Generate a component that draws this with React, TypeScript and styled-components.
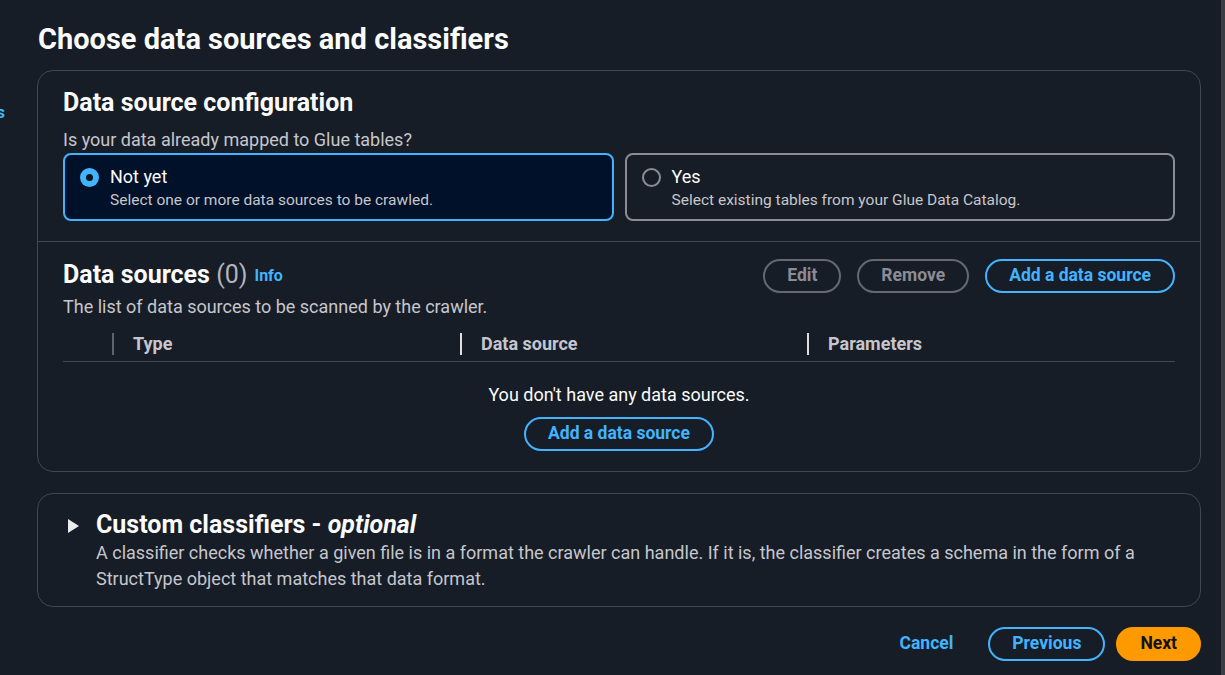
import React from "react";
import styled, { createGlobalStyle, css } from "styled-components";

const FONT = `Roboto, "Noto Sans", "Liberation Sans", sans-serif`;

const GlobalStyle = createGlobalStyle`
  html, body {
    margin: 0;
    padding: 0;
    background: #161d26;
    font-family: ${FONT};
    color: #dedee3;
  }
  * { box-sizing: border-box; }
`;

const Page = styled.div`
  display: flex;
  width: 1225px;
  height: 675px;
  overflow: hidden;
  background: #161d26;
`;

const NavStub = styled.div`
  width: 5px;
  padding-top: 101px;
  display: flex;
  justify-content: flex-end;
  overflow: hidden;
  white-space: nowrap;
  color: #42b4ff;
  font-weight: 700;
  font-size: 17px;
  line-height: 22px;
`;

const Main = styled.main`
  width: 1164px;
  margin-left: 32px;
  display: flex;
  flex-direction: column;
`;

const Scrollbar = styled.div`
  margin-left: auto;
  width: 4px;
  background: #3b3f45;
`;

const PageTitle = styled.h1`
  margin: 0;
  padding: 21px 0 0 1px;
  font-size: 29px;
  line-height: 36px;
  font-weight: 700;
  color: #fbfbfb;
  height: 70px;
`;

const Card = styled.section`
  border: 1px solid #424650;
  border-radius: 16px;
  background: #161d26;
`;

const Section = styled.div<{ $divider?: boolean }>`
  padding: 0 25px;
  ${(p) =>
    p.$divider &&
    css`
      border-bottom: 1px solid #424650;
    `}
`;

const Heading = styled.h2`
  margin: 0;
  font-size: 25px;
  line-height: 30px;
  font-weight: 700;
  color: #fbfbfb;
`;

const Counter = styled.span`
  font-weight: 400;
  color: #b4b4bb;
`;

const InfoLink = styled.a`
  margin-left: 7px;
  font-size: 16px;
  font-weight: 700;
  color: #42b4ff;
  vertical-align: 2px;
`;

const Body = styled.p<{ $tight?: boolean }>`
  margin: 0;
  font-size: 18px;
  line-height: ${(p) => (p.$tight ? "22px" : "26px")};
  color: #c6c6cd;
`;

const TileRow = styled.div`
  display: grid;
  grid-template-columns: 1fr 1fr;
  gap: 11px;
  margin-top: 2px;
`;

const Tile = styled.div<{ $selected?: boolean }>`
  height: 68px;
  border: 2px solid ${(p) => (p.$selected ? "#42b4ff" : "#8c8c94")};
  background: ${(p) => (p.$selected ? "#001129" : "transparent")};
  border-radius: 8px;
  padding: 11px 14px 0 15px;
  display: flex;
  gap: 11px;
`;

const Radio = styled.span<{ $checked?: boolean }>`
  flex: none;
  width: 19px;
  height: 19px;
  margin-top: 2px;
  border-radius: 50%;
  ${(p) =>
    p.$checked
      ? css`
          background: #42b4ff;
          display: flex;
          align-items: center;
          justify-content: center;
          &::after {
            content: "";
            width: 7px;
            height: 7px;
            border-radius: 50%;
            background: #0f141a;
          }
        `
      : css`
          border: 2px solid #8c8c94;
        `}
`;

const TileText = styled.div`
  display: flex;
  flex-direction: column;
`;

const TileLabel = styled.span`
  font-size: 18px;
  line-height: 22px;
  color: #fbfbfb;
`;

const TileDesc = styled.span`
  margin-top: 2px;
  font-size: 15.5px;
  line-height: 20px;
  color: #c6c6cd;
`;

const HeaderRow = styled.div`
  display: flex;
  align-items: center;
  padding-top: 17px;
  height: 50px;
`;

const Actions = styled.div`
  margin-left: auto;
  display: flex;
  gap: 16px;
`;

const Button = styled.button<{ $variant?: "normal" | "disabled" | "primary" | "link" }>`
  height: 34px;
  padding: 0 22px;
  border-radius: 17px;
  border: 2px solid #42b4ff;
  background: transparent;
  color: #42b4ff;
  font-family: ${FONT};
  font-size: 17.5px;
  font-weight: 700;
  line-height: 1;
  cursor: pointer;
  ${(p) =>
    p.$variant === "disabled" &&
    css`
      border-color: #656871;
      color: #8c8c94;
      cursor: default;
    `}
  ${(p) =>
    p.$variant === "primary" &&
    css`
      border-color: #ff9900;
      background: #ff9900;
      color: #0f141a;
    `}
  ${(p) =>
    p.$variant === "link" &&
    css`
      border-color: transparent;
    `}
`;

const Table = styled.div``;

const TableHead = styled.div`
  display: grid;
  grid-template-columns: 49px 348px 347px 1fr;
  height: 44px;
  padding-top: 15px;
  border-bottom: 1px solid #424650;
`;

const HeadCell = styled.div<{ $dim?: boolean }>`
  height: 22px;
  border-left: 2px solid ${(p) => (p.$dim ? "#5f6370" : "#dedee3")};
  padding-left: 19px;
  font-size: 18px;
  line-height: 22px;
  font-weight: 700;
  color: #c6c6cd;
`;

const SelectCell = styled.div``;

const Empty = styled.div`
  display: flex;
  flex-direction: column;
  align-items: center;
  padding: 22px 0 20px;
  gap: 11px;
`;

const EmptyText = styled.span`
  font-size: 18px;
  line-height: 22px;
  color: #fbfbfb;
`;

const CollapseCard = styled(Card)`
  margin-top: 21px;
  padding: 16px 25px 14px 30px;
  display: flex;
  gap: 17px;
`;

const Caret = styled.svg`
  flex: none;
  margin-top: 9px;
`;

const Optional = styled.i`
  font-weight: 700;
`;

const Footer = styled.div`
  display: flex;
  justify-content: flex-end;
  align-items: center;
  gap: 11px;
  margin-top: 20px;
`;

export default function App() {
  return (
    <>
      <GlobalStyle />
      <Page>
        <NavStub>Data sources</NavStub>
        <Main>
          <PageTitle>Choose data sources and classifiers</PageTitle>
          <Card>
            <Section $divider style={{ paddingTop: 17, paddingBottom: 20 }}>
              <Heading>Data source configuration</Heading>
              <Body $tight style={{ marginTop: 11 }}>
                Is your data already mapped to Glue tables?
              </Body>
              <TileRow>
                <Tile $selected>
                  <Radio $checked />
                  <TileText>
                    <TileLabel>Not yet</TileLabel>
                    <TileDesc>Select one or more data sources to be crawled.</TileDesc>
                  </TileText>
                </Tile>
                <Tile>
                  <Radio />
                  <TileText>
                    <TileLabel>Yes</TileLabel>
                    <TileDesc>Select existing tables from your Glue Data Catalog.</TileDesc>
                  </TileText>
                </Tile>
              </TileRow>
            </Section>
            <Section>
              <HeaderRow>
                <Heading>
                  Data sources <Counter>(0)</Counter>
                  <InfoLink>Info</InfoLink>
                </Heading>
                <Actions>
                  <Button $variant="disabled">Edit</Button>
                  <Button $variant="disabled">Remove</Button>
                  <Button>Add a data source</Button>
                </Actions>
              </HeaderRow>
              <Body $tight style={{ marginTop: 4 }}>
                The list of data sources to be scanned by the crawler.
              </Body>
              <Table>
                <TableHead>
                  <SelectCell />
                  <HeadCell $dim>Type</HeadCell>
                  <HeadCell>Data source</HeadCell>
                  <HeadCell>Parameters</HeadCell>
                </TableHead>
                <Empty>
                  <EmptyText>You don't have any data sources.</EmptyText>
                  <Button>Add a data source</Button>
                </Empty>
              </Table>
            </Section>
          </Card>
          <CollapseCard>
            <Caret width="11" height="14" viewBox="0 0 11 14">
              <polygon points="0,0 11,7 0,14" fill="#e9ebed" />
            </Caret>
            <div>
              <Heading>
                Custom classifiers - <Optional>optional</Optional>
              </Heading>
              <Body>
                A classifier checks whether a given file is in a format the crawler can handle. If it is,
                the classifier creates a schema in the form of a StructType object that matches that data
                format.
              </Body>
            </div>
          </CollapseCard>
          <Footer>
            <Button $variant="link">Cancel</Button>
            <Button>Previous</Button>
            <Button $variant="primary">Next</Button>
          </Footer>
        </Main>
        <Scrollbar />
      </Page>
    </>
  );
}
